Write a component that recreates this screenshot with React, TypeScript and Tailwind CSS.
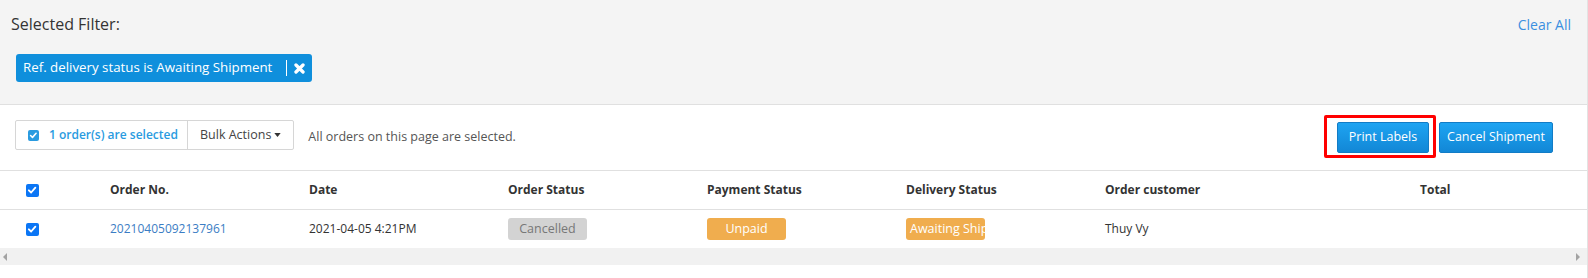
import React from "react";

function Check({ size = 13, color = "bg-[#0b76f5]" }: { size?: number; color?: string }) {
    return (
        <span
            className={`inline-flex items-center justify-center rounded-[2px] ${color}`}
            style={{ width: size, height: size }}
        >
            <svg viewBox="0 0 12 12" className="w-[78%] h-[78%]">
                <path d="M2.2 6.3 L4.9 8.9 L9.9 3.2" fill="none" stroke="#fff" strokeWidth="2.2" strokeLinecap="round" strokeLinejoin="round" />
            </svg>
        </span>
    );
}

function Badge({ text, tone }: { text: string; tone: "gray" | "orange" }) {
    const cls =
        tone === "gray"
            ? "bg-[#d3d3d3] text-[#777]"
            : "bg-[#f0ad4e] text-white";
    return (
        <span className={`block w-[79px] h-[22px] leading-[22px] px-[4px] text-center overflow-hidden whitespace-nowrap rounded-[3px] text-[12.5px] ${cls}`}>
            {text}
        </span>
    );
}

const cols = "grid grid-cols-[110px_199px_199px_199px_199px_199px_305px_1fr] items-center";

export default function App() {
    return (
        <div className="w-[1588px] h-[278px] bg-white border-r border-[#e3e3e3] overflow-hidden font-['Open_Sans',sans-serif] text-[#333]">
            {/* selected filter */}
            <section className="h-[105px] bg-[#f4f4f4] border-b border-[#e0e0e0] pl-[11px] pr-[16px] pt-[12px]">
                <div className="flex items-center justify-between h-[24px]">
                    <h2 className="text-[16px] font-medium text-[#333]">Selected Filter:</h2>
                    <a className="text-[14px] text-[#3a8fe0] cursor-pointer">Clear All</a>
                </div>
                <div className="mt-[18px] ml-[5px] inline-flex items-center h-[28px] rounded-[3px] bg-[#0f8fdc] text-white pl-[7px] pr-[7px]">
                    <span className="text-[13.3px] whitespace-nowrap">Ref. delivery status is Awaiting Shipment</span>
                    <span className="ml-[14px] w-px h-[16px] bg-white" />
                    <svg viewBox="0 0 10 10" className="ml-[7px] w-[11px] h-[11px]">
                        <path d="M1.8 1.8 L8.2 8.2 M8.2 1.8 L1.8 8.2" stroke="#fff" strokeWidth="3" strokeLinecap="round" />
                    </svg>
                </div>
            </section>

            {/* toolbar */}
            <section className="h-[66px] border-b border-[#e0e0e0] flex items-center pl-[15px] pr-[34px]">
                <div className="flex h-[30px] border border-[#d6d6d6] rounded-[2px] -mt-[5px]">
                    <div className="flex items-center w-[172px] pl-[12px] gap-[10px] border-r border-[#d6d6d6]">
                        <Check size={11} color="bg-[#2a9be0]" />
                        <span className="text-[12px] font-semibold text-[#2a9be0] whitespace-nowrap">1 order(s) are selected</span>
                    </div>
                    <button className="flex items-center pl-[12px] pr-[12px] text-[12.5px] text-[#444] whitespace-nowrap">
                        Bulk Actions
                        <svg viewBox="0 0 8 5" className="ml-[3px] w-[7px] h-[4px]">
                            <path d="M0 0 L8 0 L4 5 Z" fill="#333" />
                        </svg>
                    </button>
                </div>
                <p className="ml-[14px] text-[12.5px] text-[#555]">All orders on this page are selected.</p>
                <div className="ml-auto flex items-center gap-[10px]">
                    <span className="relative">
                        <button className="w-[92px] h-[31px] rounded-[2px] border border-[#127cc6] bg-gradient-to-b from-[#1ea4f2] to-[#1287d6] text-white text-[12.5px]">
                            Print Labels
                        </button>
                        <span className="absolute -left-[13px] -right-[7px] -top-[7px] -bottom-[5px] border-[3px] border-[#ff0000] rounded-[2px] pointer-events-none" />
                    </span>
                    <button className="w-[114px] h-[31px] rounded-[2px] border border-[#127cc6] bg-gradient-to-b from-[#1ea4f2] to-[#1287d6] text-white text-[12.5px]">
                        Cancel Shipment
                    </button>
                </div>
            </section>

            {/* table header */}
            <div className={`${cols} h-[39px] border-b border-[#e0e0e0] text-[12px] font-bold text-[#333]`}>
                <div className="pl-[26px] flex"><Check /></div>
                <div>Order No.</div>
                <div>Date</div>
                <div>Order Status</div>
                <div>Payment Status</div>
                <div>Delivery Status</div>
                <div>Order customer</div>
                <div className="pl-[10px]">Total</div>
            </div>

            {/* table row */}
            <div className={`${cols} h-[38px] text-[12px] text-[#333]`}>
                <div className="pl-[26px] flex"><Check /></div>
                <a className="text-[#3b7dc4] cursor-pointer">20210405092137961</a>
                <div>2021-04-05 4:21PM</div>
                <div><Badge text="Cancelled" tone="gray" /></div>
                <div><Badge text="Unpaid" tone="orange" /></div>
                <div><Badge text="Awaiting Shipment" tone="orange" /></div>
                <div>Thuy Vy</div>
                <div />
            </div>

            {/* horizontal scrollbar */}
            <div className="h-[17px] bg-[#f1f1f1] flex items-center justify-between px-[3px]">
                <svg viewBox="0 0 4 8" className="w-[4px] h-[8px]">
                    <path d="M4 0 L0 4 L4 8 Z" fill="#a3a3a3" />
                </svg>
                <svg viewBox="0 0 4 8" className="w-[4px] h-[8px] mr-[4px]">
                    <path d="M0 0 L4 4 L0 8 Z" fill="#a3a3a3" />
                </svg>
            </div>
        </div>
    );
}
